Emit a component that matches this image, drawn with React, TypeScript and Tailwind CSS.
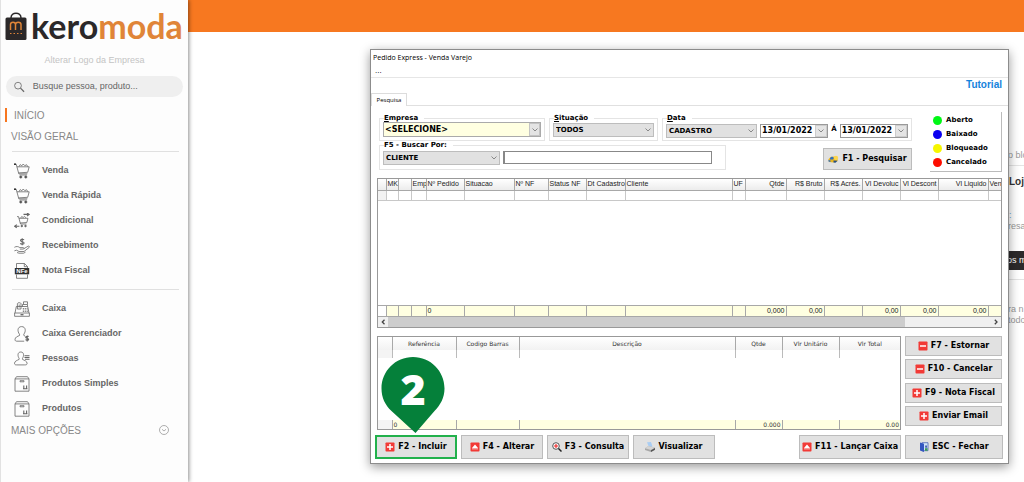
import type { ReactNode } from "react";

const verdana = "font-['DejaVu_Sans',Verdana,sans-serif]";

function Svg({ children, className = "size-4" }: { children: ReactNode; className?: string }) {
  return (
    <svg viewBox="0 0 16 16" className={className} fill="none" stroke="#666" strokeWidth="0.8" aria-hidden="true">
      {children}
    </svg>
  );
}

function CartIcon() {
  return (
    <Svg>
      <path d="M0 1.2h2.2l2.6 9.6h8.6M2.9 3.8h12.3l-1.5 5.5-9.2.6" />
      <path d="M5 3.6l1.2-2 1.6 1.2 1.4-1.8 1.6 1.7 1.8-1 1.2 2" />
      <path d="M0 .6h2v1.5H0z" fill="#333" stroke="none" />
      <path d="M5.5 12h7.5" />
      <circle cx="6.8" cy="14" r="1.1" fill="#333" />
      <circle cx="11.8" cy="14" r="1.1" fill="#333" />
    </Svg>
  );
}

function ReturnCartIcon() {
  return (
    <Svg>
      <path d="M3 3.6h1.5l2 7.4h6M5 5.3h9l-1.2 4.2-6.7.5M6.7 5l1-1.5 1.5 1 1.3-1.2 1.5 1.6" />
      <circle cx="7.8" cy="13" r=".8" fill="#333" />
      <circle cx="11.5" cy="13" r=".8" fill="#333" />
      <path d="M9.5 1.4h5.6M13 0l2.2 1.4L13 3M.8 13.2h4.6M2.8 11.6L.6 13.2l2.2 1.7" strokeWidth="1.1" />
    </Svg>
  );
}

function HandMoneyIcon() {
  return (
    <Svg>
      <path d="M10 2c-.6-1-3.5-1-3.5.6 0 1.6 3.6.8 3.6 2.4 0 1.6-3.2 1.6-3.8.3M8.2.2v7" strokeWidth="1.1" />
      <path d="M.4 9.3c2-1.3 4-.8 5.400.3h3.400c1 .1 1 1.400 0 1.500H5.800M9.800 10.700l4.300-2.500c1-.4 1.800.4 1 1.300L10 13.500H5l-2.400-1.300-2.200.6M3 14.500l2 .7h4.500l2-1" />
    </Svg>
  );
}

function NfeIcon() {
  return (
    <Svg>
      <path d="M2.500 5V.5h8l3 3V5M10.300.5v3.200h3.200M2.500 11.500v3.800h11v-3.800" />
      <path d="M.8 5h14.400v6.300H.8z" fill="#333" stroke="none" />
      <text x="8" y="10.200" textAnchor="middle" fontSize="6" fontWeight="700" fill="#fff" stroke="none" fontFamily="Liberation Sans, sans-serif">
        NFe
      </text>
    </Svg>
  );
}

function RegisterIcon() {
  return (
    <Svg>
      <path d="M.6 12h14.800v3.300H.6zM1 12l1.300-6.500h11.400L15 12M3.400 8V2.600c0-1.200 3.600-1.200 3.600 0V8zM8.500 5.500V3.500h5v2M9.500 3.300V.8h4v2.500M5.200 3.500v3" />
      <path d="M8.800 7.500h4.800M8.800 9h5M8.800 10.500h5.200" strokeDasharray="1.200 .7" />
      <path d="M6.500 13.700h3" strokeWidth="1.300" />
    </Svg>
  );
}

function PersonMoneyIcon() {
  return (
    <Svg>
      <path d="M9.800 9.400V8.200C12 5.600 12 .6 7.600.6S3.300 5.600 5.500 8.200v1.300C3.500 10.500 1 11 1 13.700c0 1 .8 1.500 1.800 1.500h7.400M9.800 9.400l1.200.7" />
      <path d="M14.500 10.800c-.5-.9-2.800-.8-2.800.5s2.900.7 2.900 2c0 1.300-2.500 1.300-3 .3M13.200 9.700v5.800" strokeWidth="1.200" />
    </Svg>
  );
}

function PersonListIcon() {
  return (
    <Svg>
      <path d="M6.800 1C3.400 1 3.500 5 5.100 7.300v1.100C3.300 9.400.5 10 .5 12.400c0 1.300 1 1.500 2.300 1.500h8c1.300 0 2.300-.2 2.300-1.500 0-2.400-2.800-3-4.600-4V7.300C10.100 5 10.200 1 6.800 1z" />
      <path d="M10.500 4.800h5M10.500 6.500h5M11 8.200h4.500" strokeWidth="1.100" />
    </Svg>
  );
}

function BoxIcon() {
  return (
    <Svg>
      <path d="M1 2.900h14v12.300H1zM1 2.900L2.500.7h11L15 2.900M6 4.700h4v1.100H6z" />
      <path d="M9.800 9.500v3M12.600 9.500v3M9 12.800h4.500" strokeWidth="1.100" />
    </Svg>
  );
}

const menuOne = [
  { label: "Venda", icon: <CartIcon /> },
  { label: "Venda Rápida", icon: <CartIcon /> },
  { label: "Condicional", icon: <ReturnCartIcon /> },
  { label: "Recebimento", icon: <HandMoneyIcon /> },
  { label: "Nota Fiscal", icon: <NfeIcon /> },
];

const menuTwo = [
  { label: "Caixa", icon: <RegisterIcon /> },
  { label: "Caixa Gerenciador", icon: <PersonMoneyIcon /> },
  { label: "Pessoas", icon: <PersonListIcon /> },
  { label: "Produtos Simples", icon: <BoxIcon /> },
  { label: "Produtos", icon: <BoxIcon /> },
];

function Menu({ items }: { items: { label: string; icon: ReactNode }[] }) {
  return (
    <ul>
      {items.map((item) => (
        <li key={item.label}>
          <a href="#" className="flex h-[25px] items-center gap-3 pl-[13px] text-[9px] font-bold text-[#666]">
            {item.icon}
            {item.label}
          </a>
        </li>
      ))}
    </ul>
  );
}

function Sidebar() {
  return (
    <aside className="relative z-10 w-[188px] shrink-0 border-l border-[#e2e2e2] bg-[#fdfdfd] shadow-[1px_0_4px_rgba(0,0,0,0.45)]">
      <div className="flex h-[46px] items-center pt-1.5 pl-1">
        <svg viewBox="0 0 22 29" className="h-[29px] w-[22px] shrink-0" aria-hidden="true">
          <path d="M6 6c0-6.500 10-6.500 10 0" fill="none" stroke="#2b2829" strokeWidth="1.500" />
          <rect x=".5" y="5.500" width="21" height="22.500" rx="1.500" fill="#2b2829" />
          <path d="M5.500 18v-5.500c0-3 5-3 5 0V18m0-5.500c0-3 5.500-3 5.500 0V18" fill="none" stroke="#e08538" strokeWidth="1.500" />
          <path d="M5 21.500h12" stroke="#e08538" strokeWidth="1" strokeDasharray="1.500 2" />
        </svg>
        <span className="pl-1 font-['Lato',sans-serif] text-[34px] leading-[34px] font-bold text-[#2b2829]">
          kero<span className="text-[#e08538]">moda</span>
        </span>
      </div>
      <p className="pt-2 text-center text-[9px] leading-3 text-[#c4c4c4]">Alterar Logo da Empresa</p>
      <label className="mx-[5px] mt-[10px] flex h-[21px] items-center gap-2 rounded-full bg-[#efefef] pl-2">
        <svg viewBox="0 0 12 12" className="size-3" fill="none" stroke="#666" aria-hidden="true">
          <circle cx="4.500" cy="4.500" r="3.800" strokeWidth="0.900" />
          <path d="M7.300 7.300l4 4" strokeWidth="1.400" />
        </svg>
        <input
          type="search"
          aria-label="Busca"
          placeholder="Busque pessoa, produto..."
          className="w-full min-w-0 bg-transparent text-[9px] outline-none placeholder:text-[#666]"
        />
      </label>
      <a href="#" className="mt-[11px] ml-1 flex h-[14px] items-center border-l-2 border-[#f7761f] pl-[7px] text-[10px] text-[#888]">
        INÍCIO
      </a>
      <h2 className="mt-2 pl-[10px] text-[10px] leading-[14px] text-[#888]">VISÃO GERAL</h2>
      <hr className="mt-[7px] mr-[9px] mb-[6px] ml-[11px] border-[#e0e0e0]" />
      <Menu items={menuOne} />
      <hr className="mt-[6px] mr-[9px] mb-[6px] ml-[11px] border-[#e0e0e0]" />
      <Menu items={menuTwo} />
      <button type="button" className="flex h-[18px] w-full items-center justify-between pr-[19px] pl-[10px] text-[10px] text-[#888]">
        MAIS OPÇÕES
        <svg viewBox="0 0 10 10" className="size-[10px]" fill="none" stroke="#999" strokeWidth="0.800" aria-hidden="true">
          <circle cx="5" cy="5" r="4.500" />
          <path d="M3 4.300l2 1.700 2-1.700" />
        </svg>
      </button>
    </aside>
  );
}

function Chevron() {
  return (
    <svg viewBox="0 0 8 8" className="size-2" fill="none" stroke="#888" strokeWidth="1" aria-hidden="true">
      <path d="M1.500 2.500L4 5l2.500-2.500" />
    </svg>
  );
}

function Group({ title, className = "", children }: { title: ReactNode; className?: string; children: ReactNode }) {
  return (
    <fieldset className={`min-w-0 border border-[#e4e4e4] px-[3px] ${className}`}>
      <legend className="ml-px h-2 pr-[6px] text-[7px] leading-2 font-bold">{title}</legend>
      {children}
    </fieldset>
  );
}

function Select({ label, value, className = "" }: { label: string; value: string; className?: string }) {
  return (
    <div className={`relative ${className}`}>
      <select aria-label={label} className="block h-[14px] w-full appearance-none border border-[#bdbdbd] bg-[#e1e1e1] pl-[2px] text-[7px] font-bold">
        <option>{value}</option>
      </select>
      <span className="pointer-events-none absolute inset-y-0 right-0.5 flex items-center">
        <Chevron />
      </span>
    </div>
  );
}

function DateBox({ label }: { label: string }) {
  return (
    <div className="flex h-[14px] min-w-0 flex-1 items-center border border-[#999] bg-white">
      <input aria-label={label} defaultValue="13/01/2022" className="w-full min-w-0 pl-px text-[8px] font-bold outline-none" />
      <button type="button" aria-label="Abrir calendário" className="flex h-full w-3 shrink-0 items-center justify-center border border-[#ccc] bg-[#e4e4e4]">
        <Chevron />
      </button>
    </div>
  );
}

function RedIcon({ kind }: { kind: "plus" | "minus" | "up" }) {
  return (
    <svg viewBox="0 0 10 10" className="size-[10px] shrink-0" aria-hidden="true">
      <rect x=".5" y=".5" width="9" height="9" rx=".8" fill="#f23a36" />
      {kind === "plus" && <path d="M5 2v6M2 5h6" stroke="#fff" strokeWidth="1.500" />}
      {kind === "minus" && <path d="M2 5h6" stroke="#fff" strokeWidth="1.500" />}
      {kind === "up" && <path d="M5 2.500L8 6H2zM2 6.500h6v.8H2z" fill="#fff" />}
    </svg>
  );
}

function ZoomIcon() {
  return (
    <svg viewBox="0 0 10 10" className="size-[10px] shrink-0" fill="none" aria-hidden="true">
      <circle cx="4" cy="4" r="3.300" stroke="#444" strokeWidth=".9" fill="#fff" />
      <path d="M4 2v4M2 4h4" stroke="#e22" strokeWidth="1.100" />
      <path d="M6.500 6.500L9.500 9.500" stroke="#222" strokeWidth="1.500" />
    </svg>
  );
}

function PrinterIcon() {
  return (
    <svg viewBox="0 0 10 10" className="size-[10px] shrink-0" aria-hidden="true">
      <path d="M2 .3l4-.3 1.500 4.500-3.500 1z" fill="#a9cdf3" />
      <path d="M0 6.200L3.500 4l6.500 1.800v2L6 10 0 8z" fill="#a8a8a8" />
      <path d="M0 6.200L3.500 4l6.500 1.800L6 8z" fill="#d4d4d4" />
      <path d="M6 8.200l4-2.200v1.800L6 10z" fill="#555" />
    </svg>
  );
}

function DoorIcon() {
  return (
    <svg viewBox="0 0 10 10" className="size-[10px] shrink-0" aria-hidden="true">
      <path d="M3 .7h6v8H3z" fill="#cfe4f7" stroke="#4a63b5" strokeWidth=".8" />
      <path d="M1 .5l4 1.300V10L1 8.600z" fill="#3456c0" />
      <path d="M6.300 3.500h1.500v2.200H6.300z" fill="#25459c" />
      <path d="M6 6.200h2.500v2.600H6z" fill="#3c9b57" />
    </svg>
  );
}

function SearchCarIcon() {
  return (
    <svg viewBox="0 0 11 10" className="h-[10px] w-[11px] shrink-0" aria-hidden="true">
      <path d="M.3 5.500L2.500 3l4-.5 3 2.500v2.300L6 8.500 1 8z" fill="#e9b51e" />
      <path d="M2 4l2-1.500 2 1.500-1 1.500H2zM.5 6l2 .5v1.500L.5 7.500z" fill="#2f6fc0" />
      <circle cx="8" cy="4" r="2.200" fill="#fbd44c" />
      <path d="M5.500 6.500l4 .3-2 1.900-2-.3z" fill="#254f86" />
    </svg>
  );
}

function PushButton({ icon, children, className = "h-6", border = "border border-[#bcbcbc]" }: { icon: ReactNode; children: ReactNode; className?: string; border?: string }) {
  return (
    <button type="button" className={`flex items-center justify-center gap-[3px] bg-[#e1e1e1] text-[8px] font-bold whitespace-nowrap text-black ${border} ${className}`}>
      {icon}
      {children}
    </button>
  );
}

const columns = [
  { title: "", width: "w-2", total: "" },
  { title: "MK", width: "w-3", total: "" },
  { title: "", width: "w-[13px]", total: "" },
  { title: "Emp", width: "w-[15px]", total: "" },
  { title: "Nº Pedido", width: "w-[38px]", total: "0" },
  { title: "Situacao", width: "w-[50px]", total: "" },
  { title: "Nº NF", width: "w-[34px]", total: "" },
  { title: "Status NF", width: "w-[38px]", total: "" },
  { title: "Dt Cadastro", width: "w-[39px]", total: "" },
  { title: "Cliente", width: "w-auto", total: "" },
  { title: "UF", width: "w-[13px]", total: "" },
  { title: "Qtde", width: "w-[41px]", total: "0,000", right: true },
  { title: "R$ Bruto", width: "w-[38px]", total: "0,00", right: true },
  { title: "R$ Acrés.", width: "w-[38px]", total: "", right: true },
  { title: "Vl Devoluc", width: "w-[38px]", total: "0,00", right: true },
  { title: "Vl Descont", width: "w-[38px]", total: "0,00", right: true },
  { title: "Vl Liquido", width: "w-[50px]", total: "0,00", right: true },
  { title: "Ven", width: "w-[13px]", total: "" },
];

function OrdersGrid() {
  return (
    <div className="border border-[#999] font-['Liberation_Sans',Arial,sans-serif] text-[7px] leading-2 text-[#222]">
      <table className="w-full table-fixed border-collapse">
        <thead>
          <tr className="h-[11px] bg-linear-to-b from-white to-[#ececec]">
            {columns.map((c, i) => (
              <th key={i} className={`overflow-hidden border-r border-b border-[#a8a8a8] px-px font-normal whitespace-nowrap last:border-r-0 ${c.width} ${c.right ? "text-right" : "text-left"}`}>
                {c.title}
              </th>
            ))}
          </tr>
        </thead>
        <tbody>
          <tr className="h-[10px]">
            {columns.map((_, i) => (
              <td key={i} className="border-r border-b border-[#c8c8c8] first:bg-[#f2f2f2] last:border-r-0" />
            ))}
          </tr>
          <tr className="h-[105px]">
            <td colSpan={columns.length} />
          </tr>
        </tbody>
        <tfoot>
          <tr className="h-[11px] bg-[#ffffe1]">
            {columns.map((c, i) => (
              <td key={i} className={`border border-[#a8a8a8] px-px first:border-l-0 first:bg-white last:border-r-0 ${c.right ? "text-right" : "text-left"}`}>
                {c.total}
              </td>
            ))}
          </tr>
        </tfoot>
      </table>
      <div className="flex h-[10px] items-center bg-[#f0f0f0]">
        <svg viewBox="0 0 10 10" className="size-[10px] shrink-0" fill="none" stroke="#444" strokeWidth="1.300" aria-hidden="true">
          <path d="M6.500 2.800L4.300 5l2.200 2.200" />
        </svg>
        <div className="h-full w-[83%] bg-[#cdcdcd]" />
        <svg viewBox="0 0 10 10" className="ml-auto size-[10px] shrink-0" fill="none" stroke="#444" strokeWidth="1.300" aria-hidden="true">
          <path d="M3.800 2.800L6 5 3.800 7.200" />
        </svg>
      </div>
    </div>
  );
}

const itemColumns = [
  { title: "", width: "w-[14px]", total: "" },
  { title: "Referência", width: "w-16", total: "0" },
  { title: "Codigo Barras", width: "w-[63px]", total: "" },
  { title: "Descrição", width: "w-auto", total: "" },
  { title: "Qtde", width: "w-[47px]", total: "0.000" },
  { title: "Vlr Unitário", width: "w-[57px]", total: "" },
  { title: "Vlr Total", width: "w-[61px]", total: "0.00" },
];

function ItemsGrid() {
  return (
    <div className="min-w-0 flex-1 border border-[#999] text-[6px] leading-[7px] text-[#333]">
      <table className="w-full table-fixed border-collapse">
        <thead>
          <tr className="h-[13px] bg-linear-to-b from-white to-[#f2f2f2]">
            {itemColumns.map((c, i) => (
              <th key={i} className={`border-r border-[#a8a8a8] font-normal last:border-r-0 ${c.width}`}>
                {c.title}
              </th>
            ))}
          </tr>
        </thead>
        <tbody>
          <tr className="h-2">
            {itemColumns.map((_, i) => (
              <td key={i} className="border-r border-[#bbb] first:bg-[#f4f4f4] last:border-r-0" />
            ))}
          </tr>
          <tr className="h-[62px]">
            <td colSpan={itemColumns.length} />
          </tr>
        </tbody>
        <tfoot>
          <tr className="h-[9px] bg-[#ffffe1]">
            {itemColumns.map((c, i) => (
              <td key={i} className={`border-r border-[#a8a8a8] px-px first:bg-[#f4f4f4] last:border-r-0 ${i > 3 ? "text-right" : "text-left"}`}>
                {c.total}
              </td>
            ))}
          </tr>
        </tfoot>
      </table>
    </div>
  );
}

const statuses = [
  { label: "Aberto", color: "bg-[#00f715]" },
  { label: "Baixado", color: "bg-[#0b00f0]" },
  { label: "Bloqueado", color: "bg-[#f6f600]" },
  { label: "Cancelado", color: "bg-[#fd0d00]" },
];

function Filters() {
  return (
    <div className="flex pt-[6px] pl-0.5">
      <form className="min-w-0 flex-1 pt-[2px]">
        <div className="flex gap-1">
          <Group title={<><u>E</u>mpresa</>} className="h-[27px] w-[166px]">
            <div className="relative">
              <select aria-label="Empresa" className="block h-[15px] w-full appearance-none border border-[#aaa] bg-[#ffffe1] pl-px text-[8px] font-bold">
                <option>&lt;SELECIONE&gt;</option>
              </select>
              <span className="pointer-events-none absolute inset-y-px right-px flex w-[11px] items-center justify-center border border-[#c4c4c4] bg-[#e4e4e4]">
                <Chevron />
              </span>
            </div>
          </Group>
          <Group title={<><u>S</u>ituação</>} className="h-[27px] w-[109px]">
            <Select label="Situação" value="TODOS" className="mt-px" />
          </Group>
          <Group title={<><u>D</u>ata</>} className="h-[27px] flex-1">
            <div className="flex gap-[3px] pt-[2px]">
              <Select label="Data" value="CADASTRO" className="w-[91px]" />
              <DateBox label="Data inicial" />
              <span className="text-[7px] leading-[10px] font-bold">Á</span>
              <DateBox label="Data final" />
            </div>
          </Group>
        </div>
        <div className="flex items-end justify-between">
          <Group title="F5 - Buscar Por:" className="h-[29px] w-[347px]">
            <div className="flex gap-[3px] pt-[2px]">
              <Select label="Buscar por" value="CLIENTE" className="w-[117px]" />
              <input aria-label="Texto da busca" className="h-[13px] w-[209px] border border-[#888] border-l-2 px-1 text-[8px] outline-none" />
            </div>
          </Group>
          <PushButton icon={<SearchCarIcon />} className="h-[22px] w-[89px]">
            F1 - Pesquisar
          </PushButton>
        </div>
      </form>
      <ul className="ml-[18px] flex h-[60px] w-[72px] flex-col justify-between border-r border-b border-[#bbb] pt-[3px] pb-1 pl-[3px]">
        {statuses.map((s) => (
          <li key={s.label} className="flex items-center gap-1 text-[7px] leading-[10px] font-bold">
            <span className={`size-[9px] rounded-full ${s.color}`} />
            {s.label}
          </li>
        ))}
      </ul>
    </div>
  );
}

function StepPin() {
  return (
    <div className="pointer-events-none absolute bottom-[29px] left-[10px] h-[78px] w-[64px]">
      <svg viewBox="0 0 64 78" className="size-full" aria-hidden="true">
        <path d="M32 1C14.500 1 .5 15 .5 32.500c0 9 3.500 16.500 10 22.500L34.500 77l19-22C59.500 49 63.500 41.500 63.500 32.500 63.500 15 49.500 1 32 1z" fill="#05803a" />
      </svg>
      <span className="absolute inset-x-0 top-[11px] text-center font-['Open_Sans',sans-serif] text-[43px] leading-[43px] font-extrabold text-white">2</span>
    </div>
  );
}

function OrderWindow() {
  return (
    <section className={`absolute top-[49px] left-[370px] z-20 flex w-[639px] flex-col border border-[#8c8c8c] bg-white text-black shadow-[0_3px_10px_rgba(0,0,0,0.4)] ${verdana}`}>
      <h1 className="h-4 pl-0.5 font-['Open_Sans',sans-serif] text-[7px] leading-4">Pedido Express - Venda Varejo</h1>
      <div className="h-3 border-b border-[#e6e6e6] pl-1 text-[7px] leading-[11px]">...</div>
      <div className="flex h-[28px] items-end">
        <button type="button" className="h-[13px] w-9 border border-b-0 border-[#dcdcdc] bg-white font-['Open_Sans',sans-serif] text-[6px]">
          Pesquisa
        </button>
        <div className="flex flex-1 items-start justify-end self-stretch border-b border-[#e0e0e0] pr-1.5">
          <a href="#" className="font-['Liberation_Sans',Arial,sans-serif] text-[10px] leading-[14px] font-bold text-[#1683dc]">
            Tutorial
          </a>
        </div>
      </div>
      <div className="px-1.5">
        <Filters />
        <div className="pt-[6px]">
          <OrdersGrid />
        </div>
        <div className="flex gap-1 pt-2">
          <ItemsGrid />
          <div className="flex w-[97px] flex-col justify-between pb-[3px]">
            <PushButton className="h-5" icon={<RedIcon kind="minus" />}>F7 - Estornar</PushButton>
            <PushButton className="h-5" icon={<RedIcon kind="minus" />}>F10 - Cancelar</PushButton>
            <PushButton className="h-5" icon={<RedIcon kind="plus" />}>F9 - Nota Fiscal</PushButton>
            <PushButton className="h-5" icon={<RedIcon kind="plus" />}>Enviar Email</PushButton>
          </div>
        </div>
      </div>
      <div className="flex gap-1 pt-[5px] pr-[5px] pb-1 pl-1">
        <PushButton className="h-6 w-[82px]" border="border-2 border-[#22b14c]" icon={<RedIcon kind="plus" />}>F2 - Incluir</PushButton>
        <PushButton className="h-6 w-[82px]" icon={<RedIcon kind="up" />}>F4 - Alterar</PushButton>
        <PushButton className="h-6 w-[82px]" icon={<ZoomIcon />}>F3 - Consulta</PushButton>
        <PushButton className="h-6 w-[82px]" icon={<PrinterIcon />}>Visualizar</PushButton>
        <PushButton className="ml-auto h-6 w-[102px]" icon={<RedIcon kind="up" />}>F11 - Lançar Caixa</PushButton>
        <PushButton className="h-6 w-[98px]" icon={<DoorIcon />}>ESC - Fechar</PushButton>
      </div>
      <StepPin />
    </section>
  );
}

export default function App() {
  return (
    <div className="relative flex min-h-screen overflow-hidden bg-white font-['Liberation_Sans',Arial,sans-serif]">
      <Sidebar />
      <main className="min-w-0 flex-1">
        <header className="h-8 bg-[#f77820]" />
        <div className="ml-auto w-[20px] overflow-hidden pt-[118px] text-[9px] leading-[11px] whitespace-nowrap text-[#999]">
          <p className="border-b border-[#e4e4e4] pb-1 pl-1">o bloco</p>
          <p className="pt-[10px] pl-[5px] text-[10px] font-bold text-[#333]">Loja</p>
          <p className="pt-[23px] pl-[5px] text-[#6aa6dd]">:</p>
          <p className="pl-1">resa</p>
          <p className="mt-[19px] bg-[#2c2a2b] pl-[3px] leading-[19px] text-white">os mais</p>
          <hr className="mt-[9px] border-[#e4e4e4]" />
          <p className="pt-6 pl-1">ra n</p>
          <p className="pl-1">todos</p>
        </div>
      </main>
      <OrderWindow />
    </div>
  );
}
